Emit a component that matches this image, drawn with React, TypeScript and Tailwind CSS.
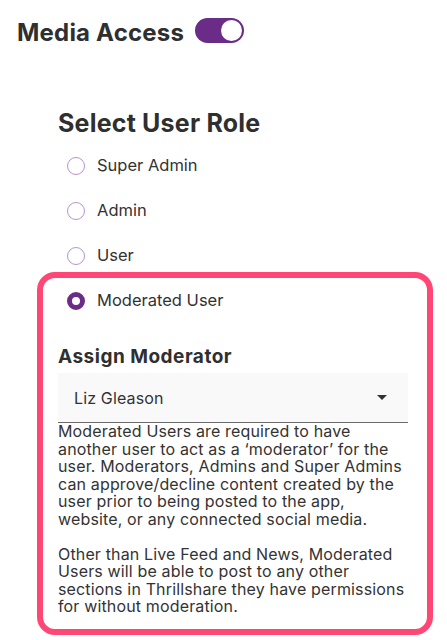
import React from "react";

function Radio({ checked }: { checked?: boolean }) {
  return checked ? (
    <span className="box-border block w-[18px] h-[18px] rounded-full border-[5px] border-[#6a2c86] bg-white shrink-0" />
  ) : (
    <span className="box-border block w-[18px] h-[18px] rounded-full border border-[#b894cc] bg-white shrink-0" />
  );
}

function Row({ label, checked }: { label: string; checked?: boolean }) {
  return (
    <div className="h-[45px] flex items-center pl-[9px]">
      <Radio checked={checked} />
      <span className="ml-[12px] text-[16.5px] text-[#333]">{label}</span>
    </div>
  );
}

export default function App() {
  return (
    <div className="w-[447px] h-[640px] bg-white font-['Inter',sans-serif] text-[#333] overflow-hidden">
      <div className="flex items-start pt-[18px] pl-[17px]">
        <h1 className="mt-[3px] text-[24px] leading-[24px] font-bold tracking-[0.2px] text-[#2f2f2f]">
          Media Access
        </h1>
        <div className="ml-[11px] w-[49px] h-[25px] rounded-full bg-[#6a2c86] flex items-center justify-end pr-[2px]">
          <span className="block w-[21px] h-[21px] rounded-full bg-white" />
        </div>
      </div>

      <div className="pl-[58px] mt-[66px]">
        <h2 className="text-[25px] leading-[24px] font-bold tracking-[0.2px] text-[#2f2f2f]">
          Select User Role
        </h2>
        <div className="mt-[8px]">
          <Row label="Super Admin" />
          <Row label="Admin" />
          <Row label="User" />
        </div>
        <div className="-mt-[6px] -ml-[21px] w-[396px] border-[6px] border-[#ff4775] rounded-[18px] pl-[15px] pb-[13px]">
          <Row label="Moderated User" checked />
          <h3 className="mt-[22px] text-[19px] leading-[24px] font-bold tracking-[0.5px] text-[#2f2f2f]">
            Assign Moderator
          </h3>
          <div className="mt-[4px] w-[350px] h-[50px] bg-[#f9f9f9] border-b border-[#6b6b6b] flex items-center justify-between pl-[16px] pr-[21px]">
            <span className="text-[16px] tracking-[0.15px] text-[#333]">Liz Gleason</span>
            <svg width="10" height="5" viewBox="0 0 10 5">
              <path d="M0 0 L10 0 L5 5 Z" fill="#333" />
            </svg>
          </div>
          <div className="w-[348px] text-[16px] leading-[17.5px] tracking-[0.15px] text-[#333]">
            <p>
              Moderated Users are required to have another user to act as a ‘moderator’ for the user.
              Moderators, Admins and Super Admins can approve/decline content created by the user prior
              to being posted to the app, website, or any connected social media.
            </p>
            <p className="mt-[17.5px]">
              Other than Live Feed and News, Moderated Users will be able to post to any other sections in
              Thrillshare they have permissions for without moderation.
            </p>
          </div>
        </div>
      </div>
    </div>
  );
}
